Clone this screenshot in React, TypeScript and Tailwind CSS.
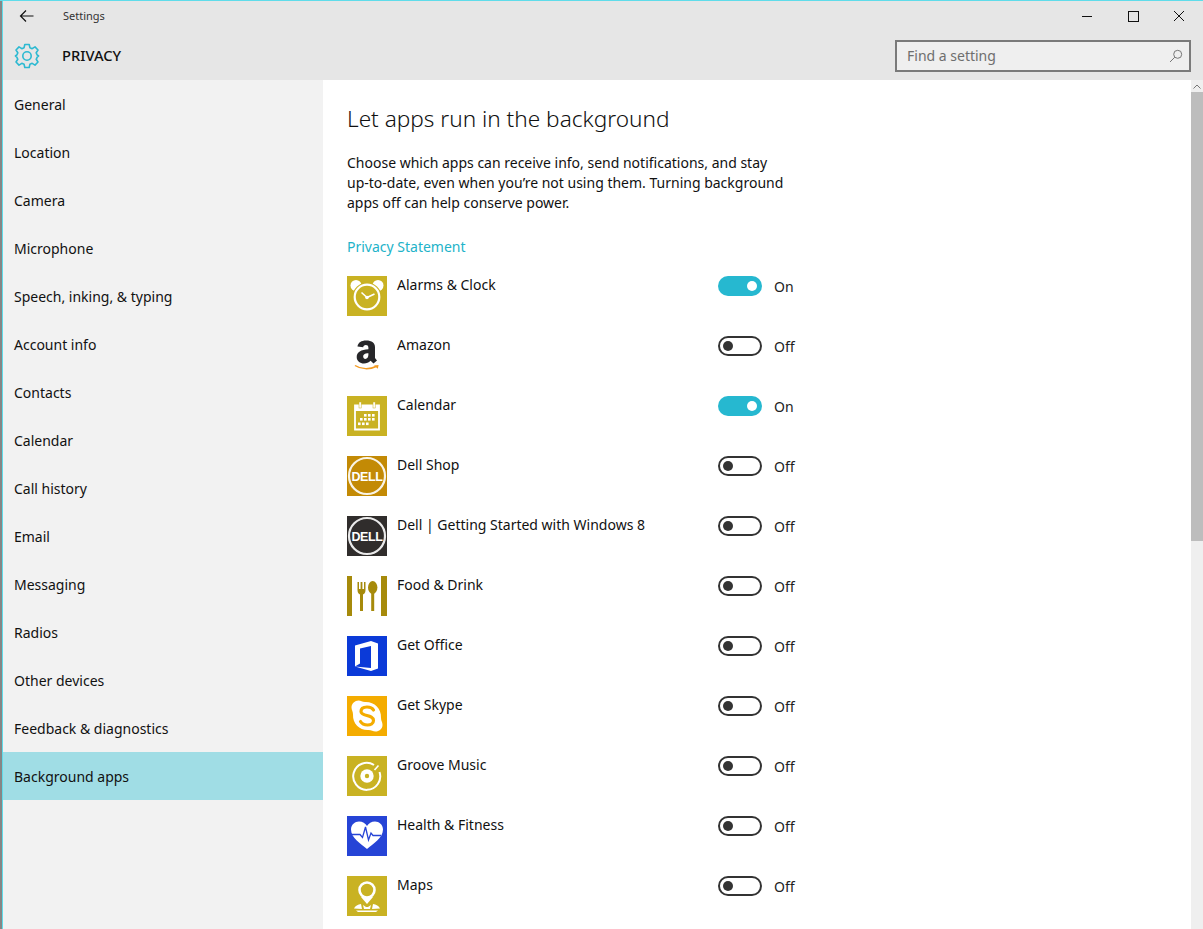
import React from "react";

const nav = ["General","Location","Camera","Microphone","Speech, inking, & typing","Account info","Contacts","Calendar","Call history","Email","Messaging","Radios","Other devices","Feedback & diagnostics","Background apps"];

const Box = ({ bg, children }: { bg: string; children?: React.ReactNode }) => (
  <svg width="40" height="40" viewBox="0 0 40 40" className="shrink-0">
    <rect width="40" height="40" fill={bg} />
    {children}
  </svg>
);

const Dell = ({ bg }: { bg: string }) => (
  <Box bg={bg}>
    <circle cx="20" cy="20" r="18" fill="none" stroke="#fff" strokeWidth="2.2" opacity="0.9" />
    <text x="20" y="24.5" textAnchor="middle" fontFamily="'Liberation Sans',sans-serif" fontWeight="700" fontSize="12.5" fill="#fff" letterSpacing="-0.4">DELL</text>
  </Box>
);

const icons: Record<string, React.ReactNode> = {
  alarm: (
    <Box bg="#c9b223">
      <circle cx="9" cy="9.5" r="5.5" fill="#fff" />
      <circle cx="31" cy="9.5" r="5.5" fill="#fff" />
      <circle cx="20" cy="21" r="14.5" fill="#c9b223" />
      <circle cx="20" cy="21" r="12.3" fill="none" stroke="#fff" strokeWidth="2.2" />
      <path d="M20 21.5 L27.5 18 M20 21.5 L14.5 16.5" stroke="#fff" strokeWidth="1.6" fill="none" />
      <circle cx="20" cy="21.5" r="1.8" fill="#fff" />
    </Box>
  ),
  amazon: (
    <Box bg="#ffffff">
      <g transform="translate(0 -3)">
        <path fillRule="evenodd" fill="#27272a" d="M10.5 13.5 C11 9.5 14.5 7.5 19 7.5 C25 7.5 28 9.8 28 14.5 V25 L30 27.5 L26.5 30.5 L23.6 27.8 C21.5 29.8 19.7 30.5 17 30.5 C13 30.5 9.7 28 9.7 24 C9.7 19 14 16.7 21.4 16.3 V14.8 C21.4 12.7 20.3 12 18.8 12 C17.2 12 16.4 13 16.2 14.2 Z M21.4 20.2 C17.6 20.3 16.2 21.5 16.2 23.5 C16.2 25 17.1 25.9 18.3 25.9 C20.2 25.9 21.4 24 21.4 21.8 Z" />
        <path d="M8 32.5 C14 36.5 23 36.5 29 33.5" fill="none" stroke="#f39a21" strokeWidth="1.5" />
        <path d="M27 32.4 L31.6 32 L30.8 35.8 Z" fill="#f39a21" />
      </g>
    </Box>
  ),
  calendar: (
    <Box bg="#c9b223">
      <path d="M8 9.5 H32 V33.5 H8 Z" fill="none" stroke="#fff" strokeWidth="1.8" />
      <rect x="8" y="9" width="24" height="6" fill="#fff" />
      <rect x="12" y="6" width="2.2" height="6" fill="#fff" stroke="#c9b223" strokeWidth="0.5" />
      <rect x="26" y="6" width="2.2" height="6" fill="#fff" stroke="#c9b223" strokeWidth="0.5" />
      {[[18,18],[22,18],[26,18],[14,22],[18,22],[22,22],[26,22],[12,26.5],[16,26.5],[20,26.5]].map(([x,y],i)=>(
        <rect key={i} x={x-1} y={y} width="2.6" height="2.6" fill="#fff" />
      ))}
    </Box>
  ),
  dellShop: <Dell bg="#c38a05" />,
  dellStart: <Dell bg="#302d2c" />,
  food: (
    <Box bg="#ffffff">
      <rect x="0" y="0" width="5" height="40" fill="#a68a0b" />
      <rect x="34" y="0" width="6" height="40" fill="#a68a0b" />
      <path d="M10.5 6 V14 C10.5 17 12 18 13 18.5 V35 H16 V18.5 C17 18 18.5 17 18.5 14 V6 H17 V13 H15.4 V6 H13.6 V13 H12 V6 Z" fill="#a68a0b" />
      <ellipse cx="25.7" cy="11.5" rx="4.7" ry="6.5" fill="#a68a0b" />
      <rect x="24.2" y="16" width="3" height="19" fill="#a68a0b" />
    </Box>
  ),
  office: (
    <Box bg="#0b3ad8">
      <path fillRule="evenodd" fill="#fff" d="M8 9.5 L24 5 L31 7.5 V32.5 L24 35 L8 30.5 L24 32 V10 L13 12.5 V27.5 L8 30.5 Z" />
    </Box>
  ),
  skype: (
    <Box bg="#f4ac00">
      <path fill="#fff" d="M11.5 4.5 C14 4.5 15 6 18 6 C27 5.5 34.5 12 34 22 C34 25 35.5 26 35.5 29 C35.5 33 32 35.5 28.5 35.5 C26 35.5 24.5 34 21.5 34 C13 34.5 5.5 28 6 18.5 C6 15.5 4.5 14 4.5 11.5 C4.5 7.5 8 4.5 11.5 4.5 Z" />
      <path fill="none" stroke="#f4ac00" strokeWidth="3.2" strokeLinecap="round" d="M26.5 14 C25 11.5 22.5 11 20 11 C16.5 11 14 12.5 14 15.5 C14 21 26.5 18 26.5 24.5 C26.5 27.5 23.5 29 20.5 29 C17.5 29 15 28 13.5 25.5" />
    </Box>
  ),
  groove: (
    <Box bg="#c9b223">
      <path d="M27 9 A13.5 13.5 0 1 0 32.5 16" fill="none" stroke="#fff" strokeWidth="2" />
      <path d="M27.5 14 L31.5 9.5" stroke="#fff" strokeWidth="1.6" />
      <circle cx="20" cy="20" r="6.7" fill="#fff" />
      <circle cx="20" cy="20" r="2.2" fill="#c9b223" />
    </Box>
  ),
  health: (
    <Box bg="#2644d6">
      <path fill="#fff" d="M20 33 C14 28 4 22 4 13.5 C4 8.5 8 5.5 12 5.5 C15.5 5.5 18.5 7.5 20 10 C21.5 7.5 24.5 5.5 28 5.5 C32 5.5 36 8.5 36 13.5 C36 22 26 28 20 33 Z" />
      <path fill="none" stroke="#2644d6" strokeWidth="1.3" d="M3 18.5 H13 L15.5 21.5 L18.5 11 L21.5 24 L24 17 L26 19.5 H30 L34 19.5" />
    </Box>
  ),
  maps: (
    <Box bg="#c9b223">
      <circle cx="20" cy="14" r="7.5" fill="none" stroke="#fff" strokeWidth="2.6" />
      <path d="M14 21 L20 28 L26 21 Z" fill="#fff" />
      <path d="M7 32.5 C8 30 11 28.5 14 28 L15 33 Z M17 33 L16 29 L19 31 L21 31 L24 29 L23 33 Z M33 32.5 C32 30 29 28.5 26 28 L25 33 Z M9 34.5 H31 L29 36 H11 Z" fill="#fff" />
    </Box>
  ),
};

const apps: [string, string, boolean][] = [
  ["Alarms & Clock","alarm",true],
  ["Amazon","amazon",false],
  ["Calendar","calendar",true],
  ["Dell Shop","dellShop",false],
  ["Dell | Getting Started with Windows 8","dellStart",false],
  ["Food & Drink","food",false],
  ["Get Office","office",false],
  ["Get Skype","skype",false],
  ["Groove Music","groove",false],
  ["Health & Fitness","health",false],
  ["Maps","maps",false],
];

const Toggle = ({ on }: { on: boolean }) => (
  <div className="flex items-center h-5">
    {on ? (
      <div className="w-[44px] h-5 rounded-full bg-[#26b8d0] flex items-center justify-end pr-[5px]">
        <div className="w-[10px] h-[10px] rounded-full bg-white" />
      </div>
    ) : (
      <div className="w-[44px] h-5 rounded-full border-2 border-[#333333] flex items-center pl-[3px]">
        <div className="w-[10px] h-[10px] rounded-full bg-[#333333]" />
      </div>
    )}
    <span className="ml-3 text-[#222222]">{on ? "On" : "Off"}</span>
  </div>
);

export default function App() {
  return (
    <div className="w-[1203px] h-[929px] overflow-hidden bg-[#5fdcea] pt-[1px] text-[14px] text-[#111111] font-['Noto_Sans','Open_Sans',sans-serif]">
      <div className="h-[928px] border-l-2 border-[#868686] flex flex-col">
        <div className="flex-1 min-h-0 border-l border-[#5fdcea] flex flex-col bg-white">
          <header className="h-[79px] shrink-0 bg-[#e6e6e6] flex flex-col">
            <div className="h-[30px] flex items-center">
              <svg width="16" height="14" viewBox="0 0 16 14" className="ml-[16px]" fill="none" stroke="#111" strokeWidth="1.2">
                <path d="M14.5 7 H1.5 M7 1.5 L1.5 7 L7 12.5" />
              </svg>
              <span className="ml-[28px] text-[11px] text-[#333333]">Settings</span>
              <div className="ml-auto flex items-center">
                <div className="w-[10px] h-[1px] bg-[#111] mr-[36px]" />
                <div className="w-[11px] h-[11px] border border-[#111] mr-[34px]" />
                <svg width="12" height="12" viewBox="0 0 12 12" className="mr-[18px]" stroke="#111" strokeWidth="1"><path d="M1 1 L11 11 M11 1 L1 11" /></svg>
              </div>
            </div>
            <div className="flex items-center h-[49px]">
              <svg width="26" height="26" viewBox="0 0 26 26" className="ml-[11px]" fill="none" stroke="#2cb9d1" strokeWidth="1.6">
                <circle cx="13" cy="13" r="4.2" />
                <path d="M10.8 1.5 H15.2 L15.9 4.7 L18.2 5.7 L21 3.9 L24 7 L22.2 9.8 L23.2 12 L24.6 13 L23.2 14.2 L22.2 16.3 L24 19 L21 22.1 L18.2 20.3 L15.9 21.3 L15.2 24.5 H10.8 L10.1 21.3 L7.8 20.3 L5 22.1 L2 19 L3.8 16.3 L2.8 14.2 L1.4 13 L2.8 12 L3.8 9.8 L2 7 L5 3.9 L7.8 5.7 L10.1 4.7 Z" strokeLinejoin="round" />
              </svg>
              <span className="ml-[22px] text-[14.7px] font-medium text-[#111]">PRIVACY</span>
              <div className="ml-auto mr-[12px] w-[296px] h-[32px] border-2 border-[#7a7a7a] bg-[#efefef] flex items-center pl-[10px] pr-[6px]">
                <span className="text-[#6e6e6e]">Find a setting</span>
                <svg width="14" height="14" viewBox="0 0 14 14" className="ml-auto" fill="none" stroke="#777" strokeWidth="1">
                  <circle cx="8.7" cy="5.3" r="4" /><path d="M5.8 8.2 L1 13" />
                </svg>
              </div>
            </div>
          </header>
          <div className="flex flex-1 min-h-0">
            <nav className="w-[320px] shrink-0 bg-[#f2f2f2]">
              {nav.map((n, i) => (
                <div key={n} className={`h-12 flex items-center pl-[11px] ${i === 14 ? "bg-[#a0dde5]" : ""}`}>{n}</div>
              ))}
            </nav>
            <main className="flex-1 flex min-w-0">
              <div className="flex-1 min-w-0 pl-6 overflow-hidden">
                <h1 className="text-[22.6px] font-light leading-8 mt-[23px] text-[#111]">Let apps run in the background</h1>
                <p className="w-[460px] leading-5 mt-[18px]">Choose which apps can receive info, send notifications, and stay<br />up-to-date, even when you’re not using them. Turning background<br />apps off can help conserve power.</p>
                <div className="mt-[24px] leading-5 text-[#22b3c9]">Privacy Statement</div>
                <div className="mt-[19px]">
                  {apps.map(([name, ic, on]) => (
                    <div key={name} className="h-[60px] flex items-start">
                      {icons[ic]}
                      <span className="ml-[10px] w-[321px] leading-5 -mt-[1px]">{name}</span>
                      <Toggle on={on} />
                    </div>
                  ))}
                </div>
              </div>
              <div className="w-3 shrink-0 bg-[#efefef] flex flex-col">
                <div className="h-3 flex items-center justify-center">
                  <svg width="8" height="5" viewBox="0 0 8 5" fill="none" stroke="#777" strokeWidth="1"><path d="M0.5 4.5 L4 1 L7.5 4.5" /></svg>
                </div>
                <div className="h-[449px] bg-[#bdbdbd]" />
              </div>
            </main>
          </div>
        </div>
      </div>
    </div>
  );
}
